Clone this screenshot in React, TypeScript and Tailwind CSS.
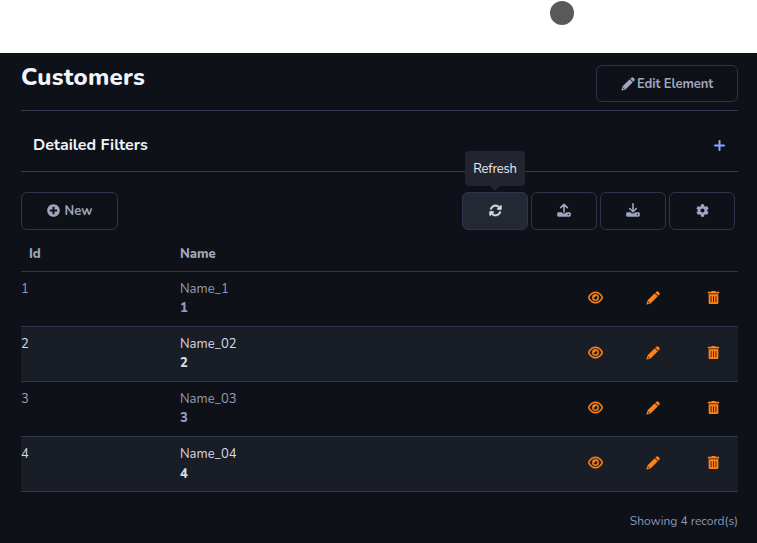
import { FaArrowsRotate, FaRegEye } from 'react-icons/fa6';
import { FaPlusCircle, FaCog, FaTrashAlt } from 'react-icons/fa';

const rows = [
  { id: 1, name: 'Name_1' },
  { id: 2, name: 'Name_02' },
  { id: 3, name: 'Name_03' },
  { id: 4, name: 'Name_04' },
];

const toolButton =
  'flex h-[38px] w-[66px] items-center justify-center rounded-md border border-[#2f344b] pb-0.5 text-[#a0a6bd]';

function PencilIcon({ className = '' }: { className?: string }) {
  return (
    <svg width="14" height="14" viewBox="0 0 14 14" fill="currentColor" className={className}>
      <path d="M10.1.9Q11.4-.3 12.6.9L13.1 1.4Q14.3 2.6 13.1 3.9L12.3 4.7 9.3 1.7Z" />
      <path
        fillRule="evenodd"
        d="M8.7 2.2 11.8 5.3 5.3 11.8Q4.8 12.3 4.2 12.5L1 13.6Q.3 13.8.5 13L1.5 9.8Q1.6 9.2 2.1 8.7ZM2.5 10.8 2 12.2 3.3 11.7V10.8Z"
      />
    </svg>
  );
}

function TrayIcon({ down = false }: { down?: boolean }) {
  return (
    <svg width="14" height="14" viewBox="0 0 14 14" fill="none">
      <path
        d={down ? 'M7 .8V8.5M3.7 5.5 7 8.8 10.3 5.5' : 'M7 9V1.5M3.7 4.6 7 1.3 10.3 4.6'}
        stroke="currentColor"
        strokeWidth="1.6"
        strokeLinecap="round"
        strokeLinejoin="round"
      />
      <path
        fill="currentColor"
        fillRule="evenodd"
        d="M1.3 9.2H4.8Q5.3 10.6 7 10.6T9.2 9.2H12.7Q13.8 9.2 13.8 10.3V12.6Q13.8 13.7 12.7 13.7H1.3Q.2 13.7 .2 12.6V10.3Q.2 9.2 1.3 9.2ZM11.3 10.8A.7.7 0 1 0 11.3 12.2A.7.7 0 1 0 11.3 10.8Z"
      />
    </svg>
  );
}

export default function App() {
  return (
    <div className="h-[543px] w-[757px] overflow-hidden bg-[#0e1118] font-['Nunito','Open_Sans',sans-serif] text-[13px] text-[#949db2]">
      <div className="flex h-[53px] bg-white pl-[550px] pt-px">
        <div className="size-6 rounded-full bg-[#58595a]" />
      </div>
      <main className="pl-[21px] pr-[19px]">
        <header className="flex h-[58px] items-start justify-between border-b border-[#343a4f] pt-3">
          <h1 className="-mt-[3px] text-2xl leading-[30px] font-extrabold tracking-[0.25px] text-[#f1f4fa]">Customers</h1>
          <button className="flex h-[37px] w-[142px] items-center justify-center gap-[2px] rounded-md border border-[#2f344b] font-bold text-[#a0a6bd]">
            <PencilIcon />
            <span className="pt-[2px] tracking-[-0.1px]">Edit Element</span>
          </button>
        </header>
        <section className="flex h-[61px] items-center justify-between border-b border-[#343a4f] pl-3 pr-[13px] pt-[7px]">
          <h2 className="text-base font-bold text-[#f1f4fa]">Detailed Filters</h2>
          <svg width="11" height="11" viewBox="0 0 11 11" className="mt-px text-[#8ca5ff]">
            <path d="M5.5 1V10M1 5.5H10" stroke="currentColor" strokeWidth="2" strokeLinecap="round" />
          </svg>
        </section>
        <div className="flex justify-between pr-[3px] pt-5">
          <button className="flex h-[38px] w-[97px] items-center justify-center gap-[5px] rounded-md border border-[#2f344b] font-bold text-[#a0a6bd]">
            <FaPlusCircle size={13} className="mb-px" />
            <span className="pt-px">New</span>
          </button>
          <div className="flex gap-[3px]">
            <button className={`${toolButton} relative bg-[#222933] text-[#d6dbe5]`}>
              <FaArrowsRotate size={13} stroke="currentColor" strokeWidth={14} />
              <span className="absolute -top-[42px] left-[2px] flex h-[35px] w-[60px] items-center justify-center rounded bg-[#222530] pt-[2px] tracking-[-0.2px] text-[#e8eaf0]">
                Refresh
                <span className="absolute top-[35px] left-[25px] border-x-5 border-t-5 border-x-transparent border-t-[#222530]" />
              </span>
            </button>
            <button className={toolButton}><TrayIcon /></button>
            <button className={toolButton}><TrayIcon down /></button>
            <button className={toolButton}><FaCog size={13} /></button>
          </div>
        </div>
        <div className="flex h-[42px] items-center border-b border-[#2f344b] pt-[8px] font-extrabold text-[#a0a6bd]">
          <span className="w-[159px] pl-2">Id</span>
          <span>Name</span>
        </div>
        {rows.map(({ id, name }) => (
          <div key={id} className="group flex h-[55px] border-b border-[#2f344b] pt-[7px] leading-5 even:bg-[#191d26] even:text-[#d6dbe5]">
            <span className="w-[159px]">{id}</span>
            <div className="w-[408px] pt-px leading-[19px]">
              <div>{name}</div>
              <div className="font-extrabold group-last-of-type:pt-px">{id}</div>
            </div>
            <div className="flex h-[38px] w-[132px] items-center justify-between pb-px text-[#ff8219]">
              <FaRegEye size={15} stroke="currentColor" strokeWidth={16} />
              <PencilIcon className="mr-[5px]" />
              <FaTrashAlt size={13} />
            </div>
          </div>
        ))}
        <footer className="pt-5 text-right text-xs leading-[18px] text-[#8a98b5]">Showing 4 record(s)</footer>
      </main>
    </div>
  );
}
